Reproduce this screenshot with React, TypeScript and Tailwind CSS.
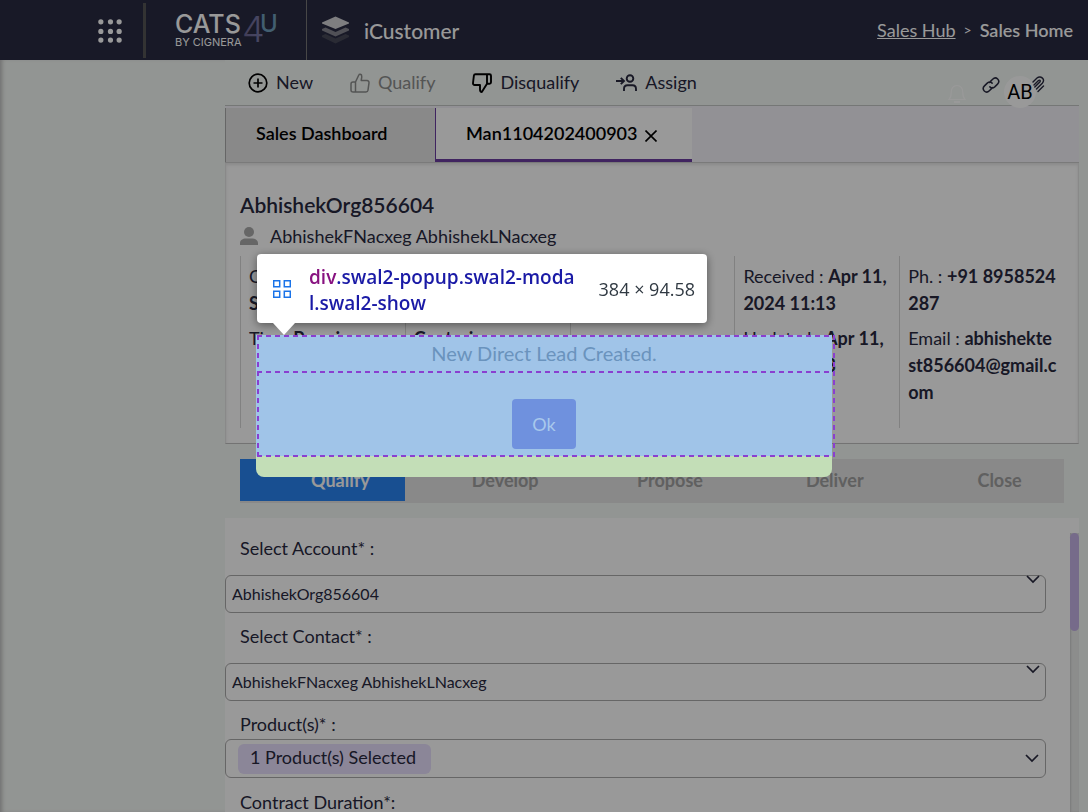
import type { ReactNode } from "react";

const DOTS = [4, 14, 23];

function GridIcon() {
  return (
    <svg width="26" height="26" viewBox="0 0 27 27" fill="#fff" aria-hidden="true">
      {DOTS.map((y) => DOTS.map((x) => <circle key={`${x}-${y}`} cx={x} cy={y + 1} r="2.7" />))}
    </svg>
  );
}

function Logo() {
  return (
    <svg width="104" height="36" viewBox="0 0 104 36" overflow="visible" role="img" aria-label="CATS4U by Cignera" fontFamily="Inter, sans-serif">
      <defs>
        <linearGradient id="fade" x1="0" x2="1">
          <stop offset="0" stopColor="#6b6490" />
          <stop offset="1" stopColor="#7b7cab" />
        </linearGradient>
      </defs>
      <text x="0" y="21" fontSize="25" fontWeight="500" fill="#fff">CATS</text>
      <text x="0" y="34" fontSize="11" fontWeight="400" fill="#fff">BY CIGNERA</text>
      <text x="67" y="30" fontSize="36" fontWeight="300" fill="url(#fade)">4</text>
      <text x="85" y="20" fontSize="24" fontWeight="500" fill="#6e9dbb">U</text>
    </svg>
  );
}

function LayersIcon() {
  return (
    <svg width="27" height="28" viewBox="0 0 27 28" aria-hidden="true">
      <path d="M0 19.5 3.5 18 13.500 22.500 23.500 18 27 19.500V21L13.500 27.500 0 21Z" fill="#474858" />
      <path d="M0 13 3.500 11.500 13.500 16 23.500 11.500 27 13V14.500L13.500 20.500 0 14.500Z" fill="#858590" />
      <path d="M0 6.500 13.500 .5 27 6.500V7.500L13.500 13 0 7.500Z" fill="#d2d2d6" />
    </svg>
  );
}

function PlusIcon() {
  return (
    <svg width="20" height="20" viewBox="0 0 20 20" fill="none" stroke="#000" strokeWidth="1.700" aria-hidden="true">
      <circle cx="10" cy="10" r="8.800" />
      <path d="M10 5.500V14.500M5.500 10H14.500" />
    </svg>
  );
}

function ThumbUpIcon() {
  return (
    <svg width="20" height="20" viewBox="0 0 20 20" fill="none" stroke="currentColor" strokeWidth="1.500" strokeLinejoin="round" aria-hidden="true">
      <path d="M5.500 9 8.800 2C9.200 1 10.800 1 11.500 2 12 3 11.800 5 11.200 7.500H17C18.300 7.500 19.200 8.500 19 9.800L18 17.200C17.800 18.400 17 19 16 19H3.200C1.800 19 1 18.200 1 17V11C1 9.700 1.800 9 3 9H5.500V19" />
    </svg>
  );
}

function ThumbDownIcon() {
  return (
    <svg width="20" height="20" viewBox="0 0 20 20" fill="none" stroke="#000" strokeWidth="1.900" strokeLinejoin="round" aria-hidden="true">
      <path d="M15 1.200H3.500C2.500 1.200 2 1.700 1.900 2.500L1 10C.9 11.300 1.500 12 2.700 12H8V16.500C8 18 8.500 19 9.800 19L15 10.800V1.200ZM15 1.200H17.500C18.500 1.200 19 1.700 19 2.700V9.300C19 10.300 18.500 10.800 17.500 10.800H15" />
    </svg>
  );
}

function AssignIcon() {
  return (
    <svg width="21" height="18" viewBox="0 0 21 18" fill="none" stroke="#28293f" strokeWidth="1.900" aria-hidden="true">
      <path d="M0 7H7.500M4.800 3.800 8 7 4.800 10.200" />
      <circle cx="14" cy="4.500" r="3.300" />
      <path d="M8 17V15C8 12.500 9.500 11.300 11.500 11.300H16.500C18.800 11.300 20 12.500 20 15V17" />
    </svg>
  );
}

function LinkIcon() {
  return (
    <svg width="18" height="18" viewBox="0 0 24 24" fill="none" stroke="#28293f" strokeWidth="2" strokeLinecap="round" aria-hidden="true">
      <path d="M10 8.500 14.200 4.300C16.300 2.200 19 2.200 20.900 4 22.800 6 22.800 8.700 20.700 10.800L17 14.500C15 16.300 12.300 16.300 10.500 14.500M14 15.500 9.800 19.700C7.700 21.800 5 21.800 3.100 20 1.200 18 1.200 15.300 3.300 13.200L7 9.500C9 7.700 11.700 7.700 13.500 9.500" />
    </svg>
  );
}

function BellIcon() {
  return (
    <svg width="18" height="20" viewBox="0 0 18 20" fill="none" stroke="#fff" strokeWidth="1.200" aria-hidden="true">
      <path d="M1 15.500C2.500 14 3.200 12.500 3.200 8.500 3.200 4 5.500 1.500 9 1.500S14.800 4 14.800 8.500C14.800 12.500 15.500 14 17 15.500Z" />
      <path d="M6 18H12" strokeWidth="2" />
    </svg>
  );
}

function ClipIcon() {
  return (
    <svg width="13" height="17" viewBox="0 0 13 17" fill="none" stroke="#28293f" strokeWidth="1.400" strokeLinecap="round" aria-hidden="true">
      <path d="M1 6 5 2C7 .3 9.500 .8 10.800 2.500 12 4.200 11.500 6 10.300 7.300L4.500 13M2 9 6.500 4.500C7.500 3.600 8.700 4.500 8 5.800L2.800 11M6 15.500 11.500 10" />
    </svg>
  );
}

function Chevron() {
  return (
    <svg width="14" height="9" viewBox="0 0 14 9" fill="none" stroke="#28293f" strokeWidth="1.700" aria-hidden="true">
      <path d="M1 1 7 7 13 1" />
    </svg>
  );
}

function ToolButton({ icon, label, muted }: { icon: ReactNode; label: string; muted?: boolean }) {
  return (
    <button type="button" disabled={muted} className={`flex items-center gap-2 ${muted ? "text-[#8c8e8d]" : "text-[#28293f]"}`}>
      {icon}
      <span className="pb-0.5">{label}</span>
    </button>
  );
}

const FACTS = [
  [["Campaign", "Seasonal"], ["Tier", "Premium"]],
  [["Segment", "Enterprise"], ["", "Centurion"]],
  [],
  [["Received", "Apr 11, 2024 11:13"], ["Updated", "Apr 11, 2024 11:13"]],
  [["Ph.", "+91 8958524287"], ["Email", "abhishektest856604@gmail.com"]],
];

const STAGES = ["Qualify", "Develop", "Propose", "Deliver", "Close"];

function Fact({ label, value, stacked }: { label: string; value: string; stacked: boolean }) {
  return (
    <p className="mb-2 break-all">
      {label && <span className="break-normal">{label} : </span>}
      <b className={`font-bold ${stacked ? "block" : ""}`}>{value}</b>
    </p>
  );
}

function SelectField({ id, label, value, low }: { id: string; label: string; value: string; low?: boolean }) {
  return (
    <div className="mb-2.5">
      <label htmlFor={id} className="mb-[13px] block pl-[15px] leading-[27px]">{label}</label>
      <div className="relative mr-6">
        <select id={id} className="block h-[38px] w-full appearance-none rounded-md border border-[#aaa] bg-white px-1.5 text-base">
          <option>{value}</option>
        </select>
        <span className={`pointer-events-none absolute right-1.5 ${low ? "top-0.5" : "top-0"}`}><Chevron /></span>
      </div>
    </div>
  );
}

function DashedOutline() {
  return (
    <svg className="pointer-events-none absolute top-0 left-0 h-[122px] w-[calc(100%+3px)]" fill="none" stroke="#8a3fd0" strokeWidth="2" strokeDasharray="5 4" aria-hidden="true">
      <path d="M2 0V122" />
      <svg x="100%" overflow="visible"><path d="M-1 0V122" /></svg>
      <line x1="1" x2="100%" y1="1" y2="1" />
      <line x1="1" x2="100%" y1="37" y2="37" />
      <line x1="1" x2="100%" y1="121" y2="121" />
    </svg>
  );
}

function Inspector() {
  return (
    <div className="absolute bottom-[154px] left-px flex h-[69px] w-[450px] items-center rounded bg-white px-4 font-['Open_Sans',sans-serif] shadow-[0_2px_10px_rgba(0,0,0,0.45)]">
      <svg width="18" height="18" viewBox="0 0 18 18" fill="none" stroke="#1a73e8" strokeWidth="1.500" className="shrink-0" aria-hidden="true">
        <path d="M.7 .7H6.700V6.700H.7ZM11.300 .7H17.300V6.700H11.300ZM.7 11.300H6.700V17.300H.7ZM11.300 11.300H17.300V17.300H11.300Z" />
      </svg>
      <p className="ml-[18px] w-[270px] shrink-0 pt-0.5 text-[19px] leading-[26px] font-semibold break-all text-[#1a1aa6]">
        <span className="text-[#881280]">div</span>.swal2-popup.swal2-modal.swal2-show
      </p>
      <span className="-mr-1 ml-auto text-lg whitespace-nowrap text-[#303942]">384 × 94.58</span>
      <svg width="22" height="12" viewBox="0 0 22 12" className="absolute top-full left-4" aria-hidden="true">
        <path d="M0 0H22L11 12Z" fill="#fff" />
      </svg>
    </div>
  );
}

export default function App() {
  return (
    <div className="flex h-screen flex-col overflow-hidden bg-[#f4f8f5] font-[Lato,sans-serif] text-lg text-[#28293f]">
      <header className="flex h-[60px] shrink-0 items-center bg-[#282a42] pr-[15px] pl-[97px] text-white">
        <button type="button" aria-label="Applications"><GridIcon /></button>
        <span className="ml-5 h-[55px] w-[3px] bg-[#555]" />
        <span className="ml-[29px]"><Logo /></span>
        <span className="ml-[27px] h-full w-px bg-[#777]" />
        <span className="ml-[15px]"><LayersIcon /></span>
        <h1 className="ml-[15px] pt-0.5 text-[21px] font-medium">iCustomer</h1>
        <nav aria-label="Breadcrumb" className="ml-auto flex items-center gap-2">
          <a href="#hub" className="underline">Sales Hub</a>
          <span className="text-sm">&gt;</span>
          <span className="font-semibold">Sales Home</span>
        </nav>
      </header>

      <div className="flex min-h-0 grow">
        <aside className="w-[225px] shrink-0 shadow-[inset_4px_0_4px_-2px_#bbb]" />
        <main className="mr-[9px] flex min-w-0 grow flex-col">
          <div className="relative z-10 flex h-[46px] shrink-0 items-center justify-between border-b border-[#c4c6c5] pr-[34px] pl-[23px]">
            <div className="flex items-center gap-[37px]">
              <ToolButton icon={<PlusIcon />} label="New" />
              <ToolButton icon={<ThumbUpIcon />} label="Qualify" muted />
              <ToolButton icon={<ThumbDownIcon />} label="Disqualify" />
              <ToolButton icon={<AssignIcon />} label="Assign" />
            </div>
            <div className="-mb-[3px] flex h-8 items-start self-end">
              <button type="button" aria-label="Notifications" className="mt-2 mr-4"><BellIcon /></button>
              <button type="button" aria-label="Copy link" className="mr-1"><LinkIcon /></button>
              <span className="flex size-8 items-center justify-center rounded-full bg-white font-[Roboto,sans-serif] text-xl text-black">AB</span>
              <button type="button" aria-label="Attachments" className="-ml-1"><ClipIcon /></button>
            </div>
          </div>

          <div role="tablist" className="flex h-[57px] shrink-0 border-b border-[#ccc] bg-[#f3f2f8] pt-0.5 font-semibold text-black">
            <button type="button" role="tab" aria-selected="false" className="w-[210px] border-l border-[#aaa] bg-[#e4e4e4] pb-1 pl-[30px] text-left">Sales Dashboard</button>
            <div className="flex w-[257px] items-center border-b-3 border-l border-[#6c3ca0] bg-white pl-[30px]">
              <button type="button" role="tab" aria-selected="true" className="pb-0.5">Man1104202400903</button>
              <button type="button" aria-label="Close tab" className="mt-1 ml-2">
                <svg width="12" height="12" viewBox="0 0 12 12" stroke="#000" strokeWidth="1.600" aria-hidden="true"><path d="M.5 .5 11.500 11.500M11.500 .5 .5 11.500" /></svg>
              </button>
            </div>
          </div>

          <section className="shrink-0 border border-t-0 border-[#e4e4e4] border-b-[#c0c0c0] bg-white px-3.5 pt-7 pb-[15px] shadow-[inset_0_2px_3px_rgba(0,0,0,0.1)]">
            <h2 className="text-[21px] leading-7 font-semibold">AbhishekOrg856604</h2>
            <p className="mt-1 mb-[7px] flex items-center gap-3 leading-[26px]">
              <svg width="18" height="18" viewBox="0 0 18 18" fill="#aaa" aria-hidden="true"><circle cx="9" cy="5" r="5" /><path d="M0 18V16C0 13 3 11.500 5.500 11.500H12.500C15 11.500 18 13 18 16V18Z" /></svg>
              AbhishekFNacxeg AbhishekLNacxeg
            </p>
            <div className="grid h-[172px] grid-cols-5 leading-[27px]">
              {FACTS.map((column, i) => (
                <div key={i} className="border-l border-[#d8d8d8] pt-[7px] pr-1.5 pl-2">
                  {column.map(([label, value], row) => (
                    <Fact key={row} label={label} value={value} stacked={i < 2 && row === 0} />
                  ))}
                </div>
              ))}
            </div>
          </section>

          <ol className="mx-[15px] mt-[15px] mb-[15px] grid h-11 shrink-0 grid-cols-5 bg-[#e4e4e4] text-center leading-[42px] font-bold text-[#a0a0a0]">
            {STAGES.map((stage, i) => (
              <li key={stage} className={i === 0 ? "mb-0.5 bg-[#2884f2] pl-9 text-white" : "pl-9"}>{stage}</li>
            ))}
          </ol>

          <div className="flex min-h-0 grow overflow-hidden">
            <form className="min-w-0 grow bg-white pt-[17px]">
              <SelectField id="account" label="Select Account* :" value="AbhishekOrg856604" />
              <SelectField id="contact" label="Select Contact* :" value="AbhishekFNacxeg AbhishekLNacxeg" low />
              <label htmlFor="products" className="mb-px block pl-[15px] leading-[27px]">Product(s)* :</label>
              <button id="products" type="button" className="mb-[11px] flex h-[39px] w-[calc(100%-24px)] items-center justify-between rounded-md border border-[#aaa] pr-1.5 pl-3">
                <span className="rounded-md bg-[#e8dffd] pr-[15px] pb-[3px] pl-3 leading-[27px]">1 Product(s) Selected</span>
                <Chevron />
              </button>
              <span className="block pl-[15px] leading-[27px] whitespace-nowrap">Contract Duration*:</span>
            </form>
            <div className="w-[9px] shrink-0 bg-white pt-[15px]">
              <div className="h-full bg-[#e9ebea] shadow-[inset_1px_0_2px_#ccc]">
                <div className="h-[98px] rounded-full bg-[#c5b2e6]" />
              </div>
            </div>
          </div>
        </main>
      </div>

      <div className="fixed inset-0 z-20 flex items-center justify-center bg-black/40">
        <div role="dialog" aria-label="New Direct Lead Created." className="relative h-[142px] w-[576px] rounded-lg bg-[#c3deb7]">
          <div className="flex h-[121px] flex-col items-center bg-[#a0c4e8]">
            <p className="pt-1 text-xl leading-7 text-[#6a93bd]">New Direct Lead Created.</p>
            <button type="button" className="mt-8 h-[50px] w-16 rounded bg-[#6f91de] text-[#a8c8ec]">Ok</button>
          </div>
          <DashedOutline />
          <Inspector />
        </div>
      </div>
    </div>
  );
}
